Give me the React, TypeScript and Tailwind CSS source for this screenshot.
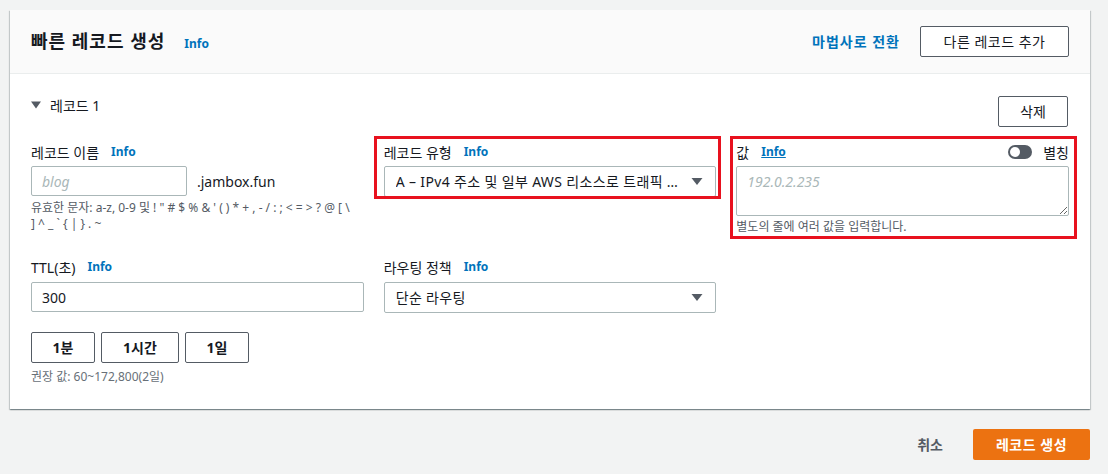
import React from "react";

const font = { fontFamily: '"Noto Sans", "Noto Sans CJK KR", sans-serif' };

function Info({ underline = false }: { underline?: boolean }) {
  return (
    <span className={`text-[12px] font-bold text-[#0073bb] ${underline ? "underline" : ""}`}>Info</span>
  );
}

function Caret() {
  return (
    <svg width="12" height="9" viewBox="0 0 12 9" className="shrink-0">
      <path d="M0.5 1 L11.5 1 L6 8 Z" fill="#545b64" />
    </svg>
  );
}

function Select({ value }: { value: string }) {
  return (
    <div className="flex h-[31px] items-center justify-between gap-[8px] rounded-[2px] border border-[#aab7b8] bg-white pl-[11px] pr-[12px] text-[14px] text-[#16191f]">
      <span className="min-w-0 truncate tracking-[0.35px]">{value}</span>
      <Caret />
    </div>
  );
}

function OutlineBtn({ children, className = "" }: { children: React.ReactNode; className?: string }) {
  return (
    <button
      className={`flex h-[31px] items-center justify-center rounded-[2px] border border-[#545b64] bg-white text-[14px] font-bold text-[#545b64] ${className}`}
    >
      {children}
    </button>
  );
}

export default function App() {
  return (
    <div className="h-[474px] w-[1108px] bg-[#f2f3f3] pl-[10px] pt-[10px] text-[#16191f]" style={font}>
      <div className="w-[1080px] bg-white shadow-[0_1px_1px_0_rgba(0,28,36,0.3),1px_1px_1px_0_rgba(0,28,36,0.15),-1px_1px_1px_0_rgba(0,28,36,0.15)]">
        {/* header */}
        <div className="flex h-[64px] items-center justify-between border-b border-[#eaeded] bg-[#fafafa] pl-[21px] pr-[21px]">
          <div className="flex items-baseline">
            <h2 className="text-[18px] font-bold leading-[24px] tracking-[1px]">빠른 레코드 생성</h2>
            <span className="ml-[19px]">
              <Info />
            </span>
          </div>
          <div className="flex items-center">
            <span className="text-[14px] font-bold tracking-[1px] text-[#0073bb]">마법사로 전환</span>
            <OutlineBtn className="ml-[20px] w-[149px] font-normal tracking-[0.5px] text-[#16191f]">
              다른 레코드 추가
            </OutlineBtn>
          </div>
        </div>

        {/* body */}
        <div className="px-[21px] pb-[24px] pt-[21px]">
          <div className="flex items-start justify-between">
            <div className="flex h-[20px] items-center text-[14px]">
              <svg width="10" height="8" viewBox="0 0 10 8" className="mr-[9px]">
                <path d="M0 0.5 L10 0.5 L5 7.5 Z" fill="#545b64" />
              </svg>
              레코드 1
            </div>
            <OutlineBtn className="mr-[1px] mt-[1px] w-[70px] font-normal text-[#16191f]">삭제</OutlineBtn>
          </div>

          <div className="mt-[15px] grid grid-cols-3 items-start gap-x-[20px]">
            {/* name */}
            <div>
              <div className="flex h-[20px] items-center gap-[12px] text-[14px]">
                레코드 이름 <Info />
              </div>
              <div className="mt-[4px] flex items-center">
                <div className="flex h-[30px] w-[156px] items-center rounded-[2px] border border-[#aab7b8] pl-[10px] text-[14px] italic text-[#aab7b8]">
                  blog
                </div>
                <span className="ml-[10px] text-[14px]">.jambox.fun</span>
              </div>
              <p className="mt-[4px] whitespace-nowrap text-[12px] leading-[16px] text-[#545b64]">
                유효한 문자: a-z, 0-9 및 ! " # $ % &amp; ' ( ) * + , - / : ; &lt; = &gt; ? @ [ \
                <br />] ^ _ ` {"{"} | {"}"} . ~
              </p>
            </div>

            {/* type */}
            <div className="relative">
              <div className="pointer-events-none absolute -bottom-[2px] -left-[10px] -right-[5px] -top-[6px] border-[3px] border-[#e8111e]" />
              <div className="flex h-[20px] items-center gap-[12px] text-[14px]">
                레코드 유형 <Info />
              </div>
              <div className="mt-[4px]">
                <Select value="A – IPv4 주소 및 일부 AWS 리소스로 트래픽 라우팅" />
              </div>
            </div>

            {/* value */}
            <div className="relative">
              <div className="pointer-events-none absolute -bottom-[4px] -left-[6px] -right-[8px] -top-[6px] border-[3px] border-[#e8111e]" />
              <div className="flex h-[20px] items-center justify-between text-[14px]">
                <div className="flex items-center gap-[12px]">
                  값 <Info underline />
                </div>
                <div className="flex items-center gap-[11px]">
                  <span className="relative h-[14px] w-[24px] rounded-full bg-[#545b64]">
                    <span className="absolute left-[2px] top-[2px] h-[10px] w-[10px] rounded-full bg-white" />
                  </span>
                  <span>별칭</span>
                </div>
              </div>
              <textarea
                className="mt-[4px] block h-[50px] w-full rounded-[2px] border border-[#aab7b8] px-[10px] py-[4px] text-[14px] placeholder:italic placeholder:text-[#aab7b8]"
                placeholder="192.0.2.235"
              />
              <p className="mt-[3px] text-[12px] leading-[16px] text-[#545b64]">별도의 줄에 여러 값을 입력합니다.</p>
            </div>
          </div>

          <div className="mt-[22px] grid grid-cols-3 items-start gap-x-[20px]">
            <div>
              <div className="flex h-[20px] items-center gap-[12px] text-[14px]">
                TTL(초) <Info />
              </div>
              <div className="mt-[5px] flex h-[30px] items-center rounded-[2px] border border-[#aab7b8] pl-[10px] text-[14px]">
                300
              </div>
              <div className="mt-[20px] flex gap-[6px]">
                <OutlineBtn className="h-[30px] w-[64px] text-[#16191f]">1분</OutlineBtn>
                <OutlineBtn className="h-[30px] w-[78px] text-[#16191f]">1시간</OutlineBtn>
                <OutlineBtn className="h-[30px] w-[64px] text-[#16191f]">1일</OutlineBtn>
              </div>
              <p className="mt-[6px] text-[12px] leading-[16px] text-[#687078]">권장 값: 60~172,800(2일)</p>
            </div>
            <div>
              <div className="flex h-[20px] items-center gap-[12px] text-[14px]">
                라우팅 정책 <Info />
              </div>
              <div className="mt-[5px]">
                <Select value="단순 라우팅" />
              </div>
            </div>
            <div />
          </div>
        </div>
      </div>

      {/* footer */}
      <div className="mt-[20px] flex w-[1080px] items-center justify-end">
        <span className="text-[14px] font-bold text-[#545b64]">취소</span>
        <button className="ml-[30px] h-[31px] w-[117px] rounded-[2px] bg-[#ec7211] text-[14px] font-bold tracking-[0.5px] text-white">
          레코드 생성
        </button>
      </div>
    </div>
  );
}
